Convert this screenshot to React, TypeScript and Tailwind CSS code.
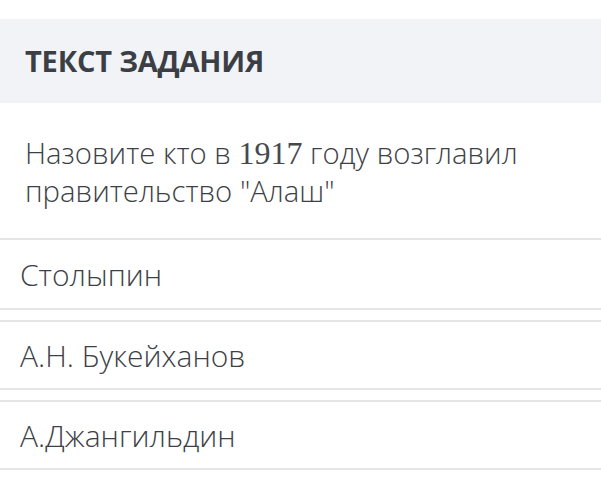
export default function App() {
  return (
    <div className="w-[601px] h-[482px] bg-white pt-[19px] text-[#3d4146]" style={{ fontFamily: '"Open Sans", sans-serif' }}>
      <div className="h-[84px] bg-[#f1f3f6] flex items-center pl-[25px]">
        <span className="text-[29px] font-bold text-[#3b3f45] tracking-[-0.2px]">ТЕКСТ ЗАДАНИЯ</span>
      </div>
      <div className="h-[137px] pl-[25px] pt-[31px] text-[29.3px] leading-[38px] font-light border-b-2 border-[#e3e5e7]">
        Назовите кто в <span style={{ fontFamily: '"Liberation Serif", serif' }} className="text-[32px] font-normal text-[#45494e]">1917</span> году возглавил
        <br />
        правительство "Алаш"
      </div>
      <div className="flex flex-col gap-[10px]">
        {["Столыпин", "А.Н. Букейханов", "А.Джангильдин"].map((t) => (
          <div key={t} className="h-[70px] border-y-2 border-[#e3e5e7] first:border-t-0 flex items-center pl-[20px] text-[30px] font-light">
            {t}
          </div>
        ))}
      </div>
    </div>
  );
}
